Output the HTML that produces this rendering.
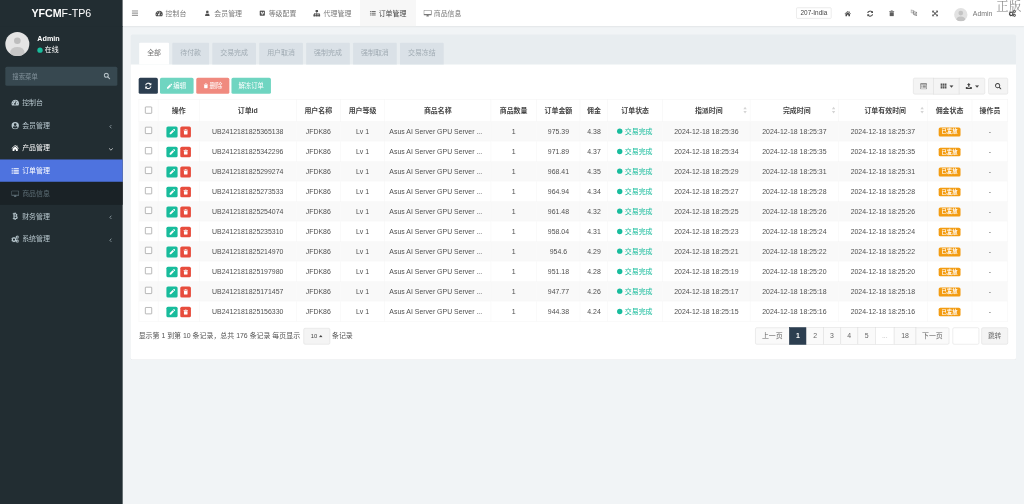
<!DOCTYPE html>
<html lang="zh-CN">
<head>
<meta charset="utf-8">
<title>YFCMF-TP6</title>
<style>
*{box-sizing:border-box;margin:0;padding:0}
html,body{width:1024px;height:504px;overflow:hidden;background:#f1f4f6}
body{font-family:"Liberation Sans","Noto Sans CJK SC",sans-serif;font-size:13px;color:#444;line-height:1.42857}
#stage{position:absolute;left:0;top:0;width:1920px;height:945px;transform:scale(.533333);transform-origin:0 0;background:#f1f4f6;overflow:hidden;filter:blur(.5px)}
.abs{position:absolute}
svg{display:block;position:absolute}
/* sidebar */
#sidebar{position:absolute;left:0;top:0;width:230px;height:945px;background:#222d32}
#logo{position:absolute;left:0;top:0;width:230px;height:50px;line-height:50px;text-align:center;color:#fff;font-size:20px;background:#222d32;white-space:nowrap}
#logo b{font-weight:700}
#avatar{position:absolute;left:10px;top:60px;width:45px;height:45px;border-radius:50%;background:#e4e4e4;overflow:hidden}
#uname{position:absolute;left:70px;top:65px;font-size:13.500px;line-height:14px;font-weight:700;color:#fff}
#ustat{position:absolute;left:70px;top:87px;font-size:13px;line-height:14px;color:#fff;white-space:nowrap}
#ustat i{display:inline-block;width:10px;height:10px;border-radius:50%;background:#18bc9c;margin-right:4px;vertical-align:-1px}
#sform{position:absolute;left:10px;top:125px;width:210px;height:36px;background:#374850;border-radius:3px;color:#82929b;font-size:12px;line-height:39px;padding-left:13px}
.mi{position:absolute;left:0;width:230px;height:42.57px;line-height:42.57px;color:#b8c7ce;font-size:13px;white-space:nowrap}
.mi span{position:absolute;left:41.5px;top:1px}
.mi.on{color:#fff}
.mi.sub{background:#1a2226;color:#5d6d75}
.mi.act{background:#4e73df;color:#fff}
/* header */
#header{position:absolute;left:230px;top:0;width:1690px;height:48.500px;background:#fff;box-shadow:0 1px 2px rgba(0,0,0,.07)}
.nt{position:absolute;top:1.200px;height:49px;line-height:49px;font-size:13px;color:#7b7b7b;white-space:nowrap}
.nt.on{color:#444}
#ntact{position:absolute;left:445px;top:0;width:105px;height:49px;background:#f7f7f7}
#selbox{position:absolute;left:1263px;top:14px;width:66px;height:21px;border:1px solid #dcdcdc;border-radius:2px;font-size:12px;line-height:20px;padding-left:7px;color:#444;white-space:nowrap;background:#fff}
#havatar{position:absolute;left:1559px;top:15px;width:25px;height:25px;border-radius:50%;background:#e2e2e2;overflow:hidden}
#hname{position:absolute;left:1594px;top:1px;line-height:50px;font-size:13px;color:#777}
#wm{position:absolute;left:1868px;top:-2.500px;font-family:"Liberation Serif","Noto Serif CJK SC",serif;font-weight:300;font-size:23px;line-height:32px;color:#808080;white-space:nowrap;letter-spacing:.8px}
/*CCSS*/
#panel{position:absolute;left:245px;top:64px;width:1660px;height:609.500px;background:#fff;border-radius:3px;box-shadow:0 1px 1px rgba(0,0,0,.05)}
#phead{position:absolute;left:0;top:0;width:1660px;height:57px;background:#e8edf0;border-radius:3px 3px 0 0}
.tb{position:absolute;top:16px;height:41px;line-height:38px;text-align:center;background:#dae1e7;color:#a0abb3;font-size:13px;border-radius:2px 2px 0 0;white-space:nowrap}
.tb.on{background:#fff;color:#6d6d6d}
.btn{position:absolute;top:82px;height:30px;border-radius:3px;color:#fff;font-size:12px;line-height:30px;white-space:nowrap}
.btn span{position:absolute;top:0}
.bg{position:absolute;top:82px;height:31px;background:#f4f4f4;border:1px solid #ddd}
table{position:absolute;left:15px;top:122px;width:1629.500px;border-collapse:collapse;table-layout:fixed;font-size:13px;color:#505050}
th{height:40.500px;font-weight:700;color:#444;text-align:center;border:1px solid #f4f4f4;white-space:nowrap;padding:4px 0 0;position:relative}
td{height:37.500px;text-align:center;border:1px solid #f5f5f5;white-space:nowrap;padding:3px 0 0;position:relative;overflow:hidden}
tbody tr:nth-child(odd){background:#f9f9f9}
.cb{display:inline-block;width:13px;height:13px;border:1px solid #7d7d7d;border-radius:1.500px;background:#fff;vertical-align:middle;position:relative;top:-3px}
.xb{display:inline-block;width:21px;height:20.500px;border-radius:3px;vertical-align:middle;position:relative}
.xb.e{background:#18bc9c;margin-right:5px}
.xb.d{background:#e74c3c;width:20px}
.pn{display:block;text-align:left;padding-left:8px}
.st{color:#18bc9c;position:relative;left:-.5px}
.st i{display:inline-block;width:10px;height:10px;border-radius:50%;background:#18bc9c;margin-right:4px;vertical-align:-.5px}
.lb{display:inline-block;background:#f39c12;color:#fff;font-weight:700;font-size:10px;line-height:16px;height:16.500px;width:41px;border-radius:3px;vertical-align:middle}
.so{position:absolute;right:5px;top:12px}
#pinfo{position:absolute;left:15px;top:550.300px;height:31px;line-height:31px;font-size:13px;color:#555;white-space:nowrap}
#psize{position:absolute;left:323.500px;top:551px;width:50px;height:31px;border:1px solid #ddd;background:#f4f4f4;border-radius:3px;font-size:11px;line-height:29px;color:#444;padding-left:13px}
#pinfo2{position:absolute;left:377.500px;top:550.300px;height:31px;line-height:31px;font-size:13px;color:#555}
.pg{position:absolute;top:550px;height:31.500px;line-height:30px;border:1px solid #ddd;background:#fafafa;color:#666;font-size:13px;text-align:center;white-space:nowrap}
.pg.on{background:#2c3e50;border-color:#2c3e50;color:#fff;font-weight:700}
.pg.dis{background:#fff;color:#bbb}
/*/CCSS*/</style>
</head>
<body>
<div id="stage">

<!-- ============ SIDEBAR ============ -->
<div id="sidebar">
  <div id="logo"><b>YFCM</b>F-TP6</div>
  <div id="avatar">
    <svg width="45" height="45" viewBox="0 0 45 45"><circle cx="22.5" cy="16.5" r="6.2" fill="#bdbdbd"/><ellipse cx="22.5" cy="37.5" rx="13.5" ry="9.5" fill="#c6c6c6"/></svg>
  </div>
  <div id="uname">Admin</div>
  <div id="ustat"><i></i>在线</div>
  <div id="sform">搜索菜单
    <svg style="left:184px;top:11px" width="13" height="13" viewBox="0 0 16 16"><circle cx="6.5" cy="6.5" r="4.6" fill="none" stroke="#b4c0c6" stroke-width="2.4"/><path d="M10 10l4.6 4.6" stroke="#b4c0c6" stroke-width="2.8" stroke-linecap="round"/></svg>
  </div>
  <!--MENU-->
  <div class="mi " style="top:171.00px"><svg style="left:20.5px;top:14.3px;fill:currentColor;" width="15" height="15" viewBox="0 0 16 16"><path fill-rule="evenodd" d="M8 2.2a7.6 7.6 0 0 1 7.6 7.6c0 1.5-.4 2.9-1.2 4H1.6A7.6 7.6 0 0 1 8 2.2zM8 3.6a.9.9 0 1 0 0 1.8.9.9 0 0 0 0-1.8zM4.2 5.2a.9.9 0 1 0 0 1.8.9.9 0 0 0 0-1.8zM2.9 9a.9.9 0 1 0 0 1.8.9.9 0 0 0 0-1.8zM13.1 9a.9.9 0 1 0 0 1.8.9.9 0 0 0 0-1.8zM10.9 5.3L8.6 9.1a1.7 1.7 0 1 1-1.3-.3l2.5-4z"/></svg><span>控制台</span></div>
  <div class="mi " style="top:213.57px"><svg style="left:20.5px;top:14.3px;fill:currentColor;" width="15" height="15" viewBox="0 0 16 16"><path fill-rule="evenodd" d="M8 .6a7.400 7.400 0 1 1 0 14.800A7.400 7.400 0 0 1 8 .6zM8 3.300a2.700 2.700 0 1 0 0 5.400 2.700 2.700 0 0 0 0-5.400zM8 13.900c1.900 0 3.600-.9 4.700-2.300-.3-1.300-1.500-2.200-2.800-2.200-.6.300-1.200.5-1.900.5s-1.300-.2-1.900-.5c-1.300 0-2.500.9-2.800 2.200 1.100 1.400 2.800 2.300 4.700 2.300z"/></svg><span>会员管理</span><svg style="left:204px;top:19.500px;fill:none;stroke:currentColor;stroke-width:1.700;opacity:.8" width="7" height="9" viewBox="0 0 8 10"><path d="M5.600 1.500L2.200 5l3.400 3.500"/></svg></div>
  <div class="mi on" style="top:256.14px"><svg style="left:20.5px;top:14.3px;fill:currentColor;" width="15" height="15" viewBox="0 0 16 16"><path d="M8 1.800l2.800 2.500V3h1.600v2.800l3 2.600-.9 1L8 3.700 1.500 9.400l-.9-1z"/><path d="M8 5l5.200 4.500v4.700h-3.700v-3.400h-3v3.400H2.800V9.500z"/></svg><span>产品管理</span><svg style="left:203px;top:20px;fill:none;stroke:currentColor;stroke-width:1.500;opacity:.85" width="10" height="8" viewBox="0 0 10 8"><path d="M1.500 2.200L5 5.600l3.500-3.400"/></svg></div>
  <div class="mi act" style="top:298.71px"><svg style="left:20.5px;top:14.3px;fill:currentColor;" width="15" height="15" viewBox="0 0 16 16"><path d="M.8 2.400h2.400v2.400H.8zM4.600 2.400h10.600v2.400H4.600zM.8 6.800h2.400v2.400H.8zM4.600 6.800h10.600v2.400H4.600zM.8 11.200h2.400v2.400H.8zM4.600 11.200h10.600v2.400H4.600z"/></svg><span>订单管理</span></div>
  <div class="mi sub" style="top:341.28px"><svg style="left:20.5px;top:14.3px;fill:currentColor;" width="15" height="15" viewBox="0 0 16 16"><path fill-rule="evenodd" d="M1.400 1.600h13.200a1.200 1.200 0 0 1 1.200 1.200v8a1.200 1.200 0 0 1-1.200 1.200H9.800c0 .6.300 1.200.6 1.600.3.400.1.800-.4.800H6c-.5 0-.7-.4-.4-.8.300-.4.600-1 .6-1.600H1.400A1.200 1.200 0 0 1 .2 10.800v-8a1.200 1.200 0 0 1 1.200-1.200zM1.500 2.900v6.800h13V2.900z"/></svg><span>商品信息</span></div>
  <div class="mi " style="top:383.85px"><svg style="left:20.5px;top:14.3px;fill:currentColor;" width="15" height="15" viewBox="0 0 16 16"><path fill-rule="evenodd" d="M3.200 2.200h2V.4h1.500v1.800h1.100V.4h1.500v1.900c1.900.3 3 1.200 3 2.800 0 1.100-.5 1.900-1.500 2.400 1.400.4 2.200 1.400 2.200 2.800 0 2-1.400 3.100-3.700 3.300v2H7.800v-1.900H6.700v1.900H5.200v-1.900h-2v-1.700h1.300V3.900H3.200zM6.800 3.900v2.900h1.400c1.100 0 1.700-.5 1.700-1.500s-.6-1.400-1.800-1.400zM6.800 8.500V12h1.700c1.300 0 2-.6 2-1.800s-.7-1.700-2.100-1.700z"/></svg><span>财务管理</span><svg style="left:204px;top:19.500px;fill:none;stroke:currentColor;stroke-width:1.700;opacity:.8" width="7" height="9" viewBox="0 0 8 10"><path d="M5.600 1.500L2.200 5l3.400 3.500"/></svg></div>
  <div class="mi " style="top:426.42px"><svg style="left:20.5px;top:14.3px;fill:currentColor;" width="15" height="15" viewBox="0 0 16 16"><path fill-rule="evenodd" d="M5.600 4.200l1.100.2.600-1 1.400.8-.4 1.100.8.800 1.100-.4.800 1.400-1 .6.200 1.100-.2 1.100 1 .6-.8 1.400-1.100-.4-.8.800.4 1.100-1.400.8-.6-1-1.100.2-1.100-.2-.6 1-1.400-.8.400-1.100-.8-.8-1.100.4-.8-1.400 1-.6L1 8.800l.2-1.100-1-.6L1 5.700l1.100.4.800-.8-.4-1.100 1.400-.8.600 1zM5.600 6.600a2.200 2.200 0 1 0 0 4.400 2.200 2.200 0 0 0 0-4.400z"/><path fill-rule="evenodd" d="M12.700 1.200l.7.300.7-.5.700.7-.5.700.3.700.9.100v1l-.9.100-.3.700.5.700-.7.700-.7-.5-.7.300-.1.900h-1l-.1-.9-.7-.3-.7.500-.7-.7.500-.7-.3-.7-.9-.1v-1l.9-.1.300-.7-.5-.7.700-.7.700.5.700-.3.100-.9h1zM12.200 2.700a1.100 1.100 0 1 0 0 2.200 1.100 1.100 0 0 0 0-2.200z"/><path fill-rule="evenodd" d="M12.700 9.200l.7.300.7-.5.700.7-.5.700.3.700.9.100v1l-.9.100-.3.700.5.700-.7.700-.7-.5-.7.300-.1.900h-1l-.1-.9-.7-.3-.7.500-.7-.7.500-.7-.3-.7-.9-.1v-1l.9-.1.300-.7-.5-.7.700-.7.700.5.700-.3.100-.9h1zM12.200 10.700a1.100 1.100 0 1 0 0 2.200 1.100 1.100 0 0 0 0-2.200z"/></svg><span>系统管理</span><svg style="left:204px;top:19.500px;fill:none;stroke:currentColor;stroke-width:1.700;opacity:.8" width="7" height="9" viewBox="0 0 8 10"><path d="M5.600 1.500L2.200 5l3.400 3.500"/></svg></div>
  <!--/MENU-->
</div>

<!-- ============ HEADER ============ -->
<div id="header">
  <!--HEADER-->
  <div id="ntact" style="left:445px;width:105px"></div>
  <svg style="left:17px;top:19px" width="12" height="11" viewBox="0 0 12 11"><path fill="#9a9a9a" d="M0 0h12v2.500H0zM0 4.250h12v2.500H0zM0 8.500h12V11H0z"/></svg>
  <svg style="left:61px;top:17.8px;fill:#505050;" width="14.5" height="14.5" viewBox="0 0 16 16"><path fill-rule="evenodd" d="M8 2.2a7.6 7.6 0 0 1 7.6 7.6c0 1.5-.4 2.9-1.2 4H1.6A7.6 7.6 0 0 1 8 2.2zM8 3.6a.9.9 0 1 0 0 1.8.9.9 0 0 0 0-1.8zM4.2 5.2a.9.9 0 1 0 0 1.8.9.9 0 0 0 0-1.8zM2.9 9a.9.9 0 1 0 0 1.8.9.9 0 0 0 0-1.8zM13.1 9a.9.9 0 1 0 0 1.8.9.9 0 0 0 0-1.8zM10.9 5.3L8.6 9.1a1.7 1.7 0 1 1-1.3-.3l2.5-4z"/></svg>
  <div class="nt " style="left:80.4px">控制台</div>
  <svg style="left:153px;top:19.2px;fill:#505050;" width="11.5" height="11.5" viewBox="0 0 16 16"><circle cx="8" cy="4.6" r="3.4"/><path d="M2.2 14.6c0-3.6 1.8-6 3.6-6 .6.5 1.4.8 2.2.8s1.6-.3 2.2-.8c1.8 0 3.6 2.4 3.6 6 0 .5-.4.8-.9.8H3.100c-.5 0-.9-.3-.9-.8z"/></svg>
  <div class="nt " style="left:171.8px">会员管理</div>
  <svg style="left:255.5px;top:19.2px;fill:#505050;" width="11.5" height="11.5" viewBox="0 0 16 16"><path fill-rule="evenodd" d="M3.200 1.200h9.600a2 2 0 0 1 2 2v9.600a2 2 0 0 1-2 2H3.200a2 2 0 0 1-2-2V3.200a2 2 0 0 1 2-2zM3.400 5.800l.5.700c.6-.4 1-.5 1.300.5l.9 3.300c.3 1 .7 1.600 1.400 1.600 1.500 0 4.700-3.900 4.900-6 .1-1.300-.5-1.900-1.500-1.900-1.200 0-2 .8-2.300 2.200.9-.4 1.500.1 1.100 1-.4.800-.8 1.500-1.200 1.500-.3 0-.5-.7-.8-2.200-.3-1.600-.7-2.500-1.700-2.400-.9.100-1.800 1-2.600 1.700z"/></svg>
  <div class="nt " style="left:273.7px">等级配置</div>
  <svg style="left:357px;top:18.0px;fill:#505050;" width="14" height="14" viewBox="0 0 16 16"><path d="M6 1h4a.7.7 0 0 1 .7.7v3a.7.7 0 0 1-.7.700H8.700v1.800H13a.9.9 0 0 1 .9.900v2.100h.8a.7.7 0 0 1 .7.700v3a.7.7 0 0 1-.7.700h-3.200a.7.7 0 0 1-.7-.7v-3a.7.7 0 0 1 .7-.7h1.100V8.500H8.700v1.700h.900a.7.7 0 0 1 .7.700v3a.7.7 0 0 1-.7.700H6.400a.7.7 0 0 1-.7-.7v-3a.7.7 0 0 1 .7-.7h.9V8.500H3.400v1.700h1.100a.7.7 0 0 1 .7.700v3a.7.7 0 0 1-.7.700H1.300a.7.7 0 0 1-.7-.7v-3a.7.7 0 0 1 .7-.7h.800V8.100a.9.9 0 0 1 .9-.9h4.300V5.400H6a.7.7 0 0 1-.7-.7v-3A.7.7 0 0 1 6 1z"/></svg>
  <div class="nt " style="left:376.8px">代理管理</div>
  <svg style="left:462.5px;top:19.0px;fill:#707070;" width="12" height="12" viewBox="0 0 16 16"><path d="M.8 2.400h2.400v2.400H.8zM4.600 2.400h10.600v2.400H4.600zM.8 6.800h2.400v2.400H.8zM4.600 6.800h10.600v2.400H4.600zM.8 11.200h2.400v2.400H.8zM4.600 11.200h10.600v2.400H4.600z"/></svg>
  <div class="nt on" style="left:480px">订单管理</div>
  <svg style="left:564px;top:17.2px;fill:#7a7a7a;" width="15.5" height="15.5" viewBox="0 0 16 16"><path fill-rule="evenodd" d="M1.400 1.600h13.200a1.200 1.200 0 0 1 1.200 1.200v8a1.200 1.200 0 0 1-1.200 1.200H9.800c0 .6.300 1.200.6 1.600.3.400.1.800-.4.800H6c-.5 0-.7-.4-.4-.8.300-.4.600-1 .6-1.600H1.400A1.200 1.200 0 0 1 .2 10.800v-8a1.200 1.200 0 0 1 1.200-1.200zM1.500 2.900v6.800h13V2.900z"/></svg>
  <div class="nt " style="left:583.3px">商品信息</div>
  <div id="selbox">207-India</div>
  <svg style="left:1352.5px;top:18.5px;fill:#4a4a4a;" width="13" height="13" viewBox="0 0 16 16"><path d="M8 1.800l2.800 2.500V3h1.600v2.800l3 2.600-.9 1L8 3.700 1.500 9.400l-.9-1z"/><path d="M8 5l5.200 4.500v4.700h-3.700v-3.400h-3v3.400H2.800V9.500z"/></svg>
  <svg style="left:1394.5px;top:18.5px;fill:#4a4a4a;" width="13" height="13" viewBox="0 0 16 16"><path d="M14.6 1.4v5.200H9.400l1.900-1.900A4.600 4.600 0 0 0 3.600 6.600H1.140A7 7 0 0 1 13 3zM1.400 14.600V9.400h5.200l-1.900 1.900a4.600 4.600 0 0 0 7.700-1.900h2.460A7 7 0 0 1 3 13z"/></svg>
  <svg style="left:1435.5px;top:19.0px;fill:#5e5e5e;" width="12" height="12" viewBox="0 0 16 16"><path d="M5.600 1.200a1 1 0 0 1 1-.8h2.800a1 1 0 0 1 1 .8l.3 1h3a.5.500 0 0 1 .5.500v.8a.5.500 0 0 1-.5.500H2.300a.5.500 0 0 1-.5-.5v-.8a.5.500 0 0 1 .5-.5h3zM2.900 5.200h10.200v8.700c0 .9-.7 1.700-1.600 1.700h-7c-.9 0-1.600-.8-1.600-1.700z"/></svg>
  <svg style="left:1477.0px;top:17.0px;fill:#5e5e5e;" width="13" height="13" viewBox="0 0 16 16"><path opacity=".45" fill-rule="evenodd" d="M.6 1.200l8.200 1.500v8.100L.6 9.300zM3.600 3.500l-1.300 4.200h1l.2-.9h1.500l.3.900h1L5 3.600zM4.200 4.500l.5 1.500h-.9z"/><path fill-rule="evenodd" d="M7.200 5.400l8.200 1.600v8.200l-8.200-1.600zM8.300 7v5.600l5.900 1.200V8.200zM10.600 8.200v.7l-1.500-.2v.7l2.400.4c-.1.500-.4 1-.8 1.400-.3-.3-.5-.6-.7-1l-.6.200c.2.500.5.900.8 1.300-.4.300-.9.500-1.400.6l.3.600c.6-.2 1.100-.4 1.600-.8.500.5 1.100.9 1.800 1.200l.2-.7c-.6-.2-1.100-.6-1.500-1 .5-.5.800-1.200 1-1.800l.8.100v-.7l-1.700-.3v-.6z"/></svg>
  <svg style="left:1517.3px;top:18.8px;fill:#5e5e5e;" width="12.5" height="12.5" viewBox="0 0 16 16"><path d="M1 1h5.600L4.600 3 6.600 5 8 6.400 9.400 5l2-2L9.400 1H15v5.600L13 4.600l-2 2L9.600 8l1.400 1.400 2 2 2-2V15H9.400l2-2-2-2L8 9.600 6.600 11l-2 2 2 2H1V9.400l2 2 2-2L6.400 8 5 6.600l-2-2-2 2z"/></svg>
  <svg style="left:1660.8px;top:17.8px;fill:#4a4a4a;" width="14.5" height="14.5" viewBox="0 0 16 16"><path fill-rule="evenodd" d="M5.600 4.200l1.100.2.600-1 1.400.8-.4 1.100.8.800 1.100-.4.800 1.400-1 .6.200 1.100-.2 1.100 1 .6-.8 1.400-1.100-.4-.8.800.4 1.100-1.400.8-.6-1-1.100.2-1.100-.2-.6 1-1.400-.8.400-1.100-.8-.8-1.100.4-.8-1.400 1-.6L1 8.800l.2-1.100-1-.6L1 5.700l1.100.4.800-.8-.4-1.100 1.400-.8.600 1zM5.600 6.600a2.200 2.200 0 1 0 0 4.400 2.200 2.200 0 0 0 0-4.400z"/><path fill-rule="evenodd" d="M12.700 1.200l.7.300.7-.5.700.7-.5.700.3.700.9.100v1l-.9.100-.3.700.5.700-.7.700-.7-.5-.7.300-.1.900h-1l-.1-.9-.7-.3-.7.500-.7-.7.500-.7-.3-.7-.9-.1v-1l.9-.1.300-.7-.5-.7.700-.7.700.5.700-.3.100-.9h1zM12.200 2.700a1.100 1.100 0 1 0 0 2.200 1.100 1.100 0 0 0 0-2.200z"/><path fill-rule="evenodd" d="M12.700 9.200l.7.300.7-.5.700.7-.5.700.3.700.9.100v1l-.9.100-.3.700.5.700-.7.700-.7-.5-.7.300-.1.900h-1l-.1-.9-.7-.3-.7.500-.7-.7.500-.7-.3-.7-.9-.1v-1l.9-.1.300-.7-.5-.7.700-.7.700.5.700-.3.100-.9h1zM12.200 10.700a1.100 1.100 0 1 0 0 2.200 1.100 1.100 0 0 0 0-2.200z"/></svg>
  <div id="havatar"><svg width="25" height="25" viewBox="0 0 45 45"><circle cx="22.500" cy="17" r="8" fill="#c4c4c4"/><ellipse cx="22.500" cy="41" rx="15" ry="12" fill="#c4c4c4"/></svg></div>
  <div id="hname">Admin</div>
  <!--/HEADER-->
</div>

<!-- ============ CONTENT ============ -->
<!--CONTENT-->
<div id="panel">
 <div id="phead">
  <div class="tb on" style="left:16px;width:56px">全部</div>
  <div class="tb " style="left:78px;width:69px">待付款</div>
  <div class="tb " style="left:153px;width:82px">交易完成</div>
  <div class="tb " style="left:241px;width:82px">用户取消</div>
  <div class="tb " style="left:329px;width:82px">强制完成</div>
  <div class="tb " style="left:417px;width:82px">强制取消</div>
  <div class="tb " style="left:505px;width:82px">交易冻结</div>
 </div>
 <div class="btn" style="left:15px;width:36px;background:#2c3e50"><svg style="left:11px;top:8px;fill:#fff;" width="14" height="14" viewBox="0 0 16 16"><path d="M14.6 1.4v5.200H9.400l1.900-1.900A4.600 4.600 0 0 0 3.600 6.600H1.140A7 7 0 0 1 13 3zM1.400 14.600V9.400h5.200l-1.900 1.900a4.600 4.600 0 0 0 7.700-1.900h2.460A7 7 0 0 1 3 13z"/></svg></div>
 <div class="btn" style="left:55px;width:63px;background:#6fd5c1"><svg style="left:12px;top:9.5px;fill:#fff;" width="11.5" height="11.5" viewBox="0 0 16 16"><path d="M11.300 1.300a1.400 1.400 0 0 1 2 0l1.400 1.400a1.400 1.400 0 0 1 0 2l-1.300 1.300-3.400-3.400zM9 3.600l3.400 3.400-7.600 7.600H1.400v-3.400z"/></svg><span style="left:25px">编辑</span></div>
 <div class="btn" style="left:122.500px;width:62px;background:#f08a7f"><svg style="left:13.5px;top:10px;fill:#fff;" width="10" height="10" viewBox="0 0 16 16"><path d="M5.600 1.200a1 1 0 0 1 1-.8h2.800a1 1 0 0 1 1 .8l.3 1h3a.5.500 0 0 1 .5.500v.8a.5.500 0 0 1-.5.500H2.300a.5.500 0 0 1-.5-.5v-.8a.5.500 0 0 1 .5-.5h3zM2.900 5.200h10.200v8.700c0 .9-.7 1.700-1.600 1.700h-7c-.9 0-1.600-.8-1.600-1.700z"/></svg><span style="left:25.500px">删除</span></div>
 <div class="btn" style="left:189px;width:74px;background:#6fd5c1"><span style="left:13px">解冻订单</span></div>
 <div class="bg" style="left:1467px;width:39px;border-radius:3px 0 0 3px"><svg style="left:12px;top:7.5px;fill:#707070;" width="13.5" height="13.5" viewBox="0 0 16 16"><path fill-rule="evenodd" d="M1.600 1.400h12.800a1 1 0 0 1 1 1v11.200a1 1 0 0 1-1 1H1.600a1 1 0 0 1-1-1V2.400a1 1 0 0 1 1-1zM1.800 4.200v9.200h12.400V4.200zM3 5.600h1.600v1.500H3zM5.800 5.600H13v1.500H5.800zM3 8.100h1.600v1.500H3zM5.800 8.100H13v1.500H5.800zM3 10.600h1.600v1.500H3zM5.800 10.600H13v1.500H5.800z"/></svg></div>
 <div class="bg" style="left:1505px;width:49px"><svg style="left:11.5px;top:8px;fill:#555;" width="12.5" height="12.5" viewBox="0 0 16 16"><path d="M.6 2h4.200v3.400H.6zM5.900 2h4.200v3.400H5.900zM11.200 2h4.200v3.400h-4.200zM.6 6.300h4.200v3.400H.6zM5.900 6.300h4.200v3.400H5.900zM11.200 6.300h4.200v3.400h-4.200zM.6 10.600h4.200V14H.6zM5.900 10.600h4.200V14H5.900zM11.200 10.600h4.200V14h-4.200z"/></svg><svg style="left:29px;top:13px" width="8" height="5" viewBox="0 0 8 5"><path d="M0 0h8L4 4.500z" fill="#444"/></svg></div>
 <div class="bg" style="left:1553px;width:49px;border-radius:0 3px 3px 0"><svg style="left:11px;top:8px;fill:#444;" width="13" height="13" viewBox="0 0 16 16"><path d="M8 .8l4.200 4.400H9.600v4H6.400v-4H3.800zM1 10.200h3.600l1.200 1.600h4.400l1.200-1.600H15v4.600H1z"/></svg><svg style="left:29px;top:13px" width="8" height="5" viewBox="0 0 8 5"><path d="M0 0h8L4 4.500z" fill="#444"/></svg></div>
 <div class="bg" style="left:1607.500px;width:37px;border-radius:3px"><svg style="left:11px;top:7.5px;fill:#444;" width="13.5" height="13.5" viewBox="0 0 16 16"><path fill-rule="evenodd" d="M6.600.8a5.800 5.800 0 0 1 4.800 9l3.500 3.500a1.200 1.200 0 0 1-1.700 1.700L9.700 11.500A5.800 5.800 0 1 1 6.600.8zM6.600 2.900a3.700 3.700 0 1 0 0 7.400 3.700 3.700 0 0 0 0-7.400z"/></svg></div>
 <table>
  <colgroup><col style="width:36px"><col style="width:77px"><col style="width:182px"><col style="width:82.5px"><col style="width:83.5px"><col style="width:198.6px"><col style="width:85.9px"><col style="width:82px"><col style="width:51.5px"><col style="width:103px"><col style="width:164px"><col style="width:166px"><col style="width:165.7px"><col style="width:84.3px"><col style="width:67.5px"></colgroup>
  <thead><tr>
   <th><i class="cb"></i></th>
   <th>操作</th>
   <th>订单id</th>
   <th>用户名称</th>
   <th>用户等级</th>
   <th>商品名称</th>
   <th>商品数量</th>
   <th>订单金额</th>
   <th>佣金</th>
   <th>订单状态</th>
   <th><span style="position:relative;left:4.500px">指派时间</span><svg class="so" width="8" height="15" viewBox="0 0 8 15"><path d="M4 1l3.200 5H.8zM4 14L.8 9h6.400z" fill="#d4d4d4"/></svg></th>
   <th><span style="position:relative;left:4.500px">完成时间</span><svg class="so" width="8" height="15" viewBox="0 0 8 15"><path d="M4 1l3.200 5H.8zM4 14L.8 9h6.400z" fill="#d4d4d4"/></svg></th>
   <th><span style="position:relative;left:4.500px">订单有效时间</span><svg class="so" width="8" height="15" viewBox="0 0 8 15"><path d="M4 1l3.200 5H.8zM4 14L.8 9h6.400z" fill="#d4d4d4"/></svg></th>
   <th>佣金状态</th>
   <th>操作员</th>
  </tr></thead>
  <tbody>
   <tr><td><i class="cb"></i></td><td><i class="xb e"><svg style="left:4.5px;top:4.3px;fill:#fff;" width="12" height="12" viewBox="0 0 16 16"><path d="M11.300 1.300a1.400 1.400 0 0 1 2 0l1.400 1.400a1.400 1.400 0 0 1 0 2l-1.300 1.300-3.400-3.400zM9 3.600l3.400 3.400-7.600 7.600H1.400v-3.400z"/></svg></i><i class="xb d"><svg style="left:5px;top:5px;fill:#fff;" width="10.5" height="10.5" viewBox="0 0 16 16"><path d="M5.600 1.200a1 1 0 0 1 1-.8h2.800a1 1 0 0 1 1 .8l.3 1h3a.5.500 0 0 1 .5.500v.8a.5.500 0 0 1-.5.500H2.300a.5.500 0 0 1-.5-.5v-.8a.5.500 0 0 1 .5-.5h3zM2.900 5.200h10.200v8.700c0 .9-.7 1.700-1.600 1.700h-7c-.9 0-1.600-.8-1.600-1.700z"/></svg></i></td><td>UB2412181825365138</td><td>JFDK86</td><td>Lv 1</td><td><span class="pn">Asus AI Server GPU Server ...</span></td><td>1</td><td>975.39</td><td>4.38</td><td><span class="st"><i></i>交易完成</span></td><td>2024-12-18 18:25:36</td><td>2024-12-18 18:25:37</td><td>2024-12-18 18:25:37</td><td><span class="lb">已发放</span></td><td>-</td></tr>
   <tr><td><i class="cb"></i></td><td><i class="xb e"><svg style="left:4.5px;top:4.3px;fill:#fff;" width="12" height="12" viewBox="0 0 16 16"><path d="M11.300 1.300a1.400 1.400 0 0 1 2 0l1.400 1.400a1.400 1.400 0 0 1 0 2l-1.300 1.300-3.400-3.400zM9 3.600l3.400 3.400-7.600 7.600H1.400v-3.400z"/></svg></i><i class="xb d"><svg style="left:5px;top:5px;fill:#fff;" width="10.5" height="10.5" viewBox="0 0 16 16"><path d="M5.600 1.200a1 1 0 0 1 1-.8h2.800a1 1 0 0 1 1 .8l.3 1h3a.5.500 0 0 1 .5.500v.8a.5.500 0 0 1-.5.500H2.300a.5.500 0 0 1-.5-.5v-.8a.5.500 0 0 1 .5-.5h3zM2.900 5.200h10.200v8.700c0 .9-.7 1.700-1.600 1.700h-7c-.9 0-1.600-.8-1.600-1.700z"/></svg></i></td><td>UB2412181825342296</td><td>JFDK86</td><td>Lv 1</td><td><span class="pn">Asus AI Server GPU Server ...</span></td><td>1</td><td>971.89</td><td>4.37</td><td><span class="st"><i></i>交易完成</span></td><td>2024-12-18 18:25:34</td><td>2024-12-18 18:25:35</td><td>2024-12-18 18:25:35</td><td><span class="lb">已发放</span></td><td>-</td></tr>
   <tr><td><i class="cb"></i></td><td><i class="xb e"><svg style="left:4.5px;top:4.3px;fill:#fff;" width="12" height="12" viewBox="0 0 16 16"><path d="M11.300 1.300a1.400 1.400 0 0 1 2 0l1.400 1.400a1.400 1.400 0 0 1 0 2l-1.300 1.300-3.400-3.400zM9 3.600l3.400 3.400-7.600 7.600H1.400v-3.400z"/></svg></i><i class="xb d"><svg style="left:5px;top:5px;fill:#fff;" width="10.5" height="10.5" viewBox="0 0 16 16"><path d="M5.600 1.200a1 1 0 0 1 1-.8h2.800a1 1 0 0 1 1 .8l.3 1h3a.5.500 0 0 1 .5.500v.8a.5.500 0 0 1-.5.500H2.300a.5.500 0 0 1-.5-.5v-.8a.5.500 0 0 1 .5-.5h3zM2.900 5.200h10.200v8.700c0 .9-.7 1.700-1.600 1.700h-7c-.9 0-1.600-.8-1.600-1.700z"/></svg></i></td><td>UB2412181825299274</td><td>JFDK86</td><td>Lv 1</td><td><span class="pn">Asus AI Server GPU Server ...</span></td><td>1</td><td>968.41</td><td>4.35</td><td><span class="st"><i></i>交易完成</span></td><td>2024-12-18 18:25:29</td><td>2024-12-18 18:25:31</td><td>2024-12-18 18:25:31</td><td><span class="lb">已发放</span></td><td>-</td></tr>
   <tr><td><i class="cb"></i></td><td><i class="xb e"><svg style="left:4.5px;top:4.3px;fill:#fff;" width="12" height="12" viewBox="0 0 16 16"><path d="M11.300 1.300a1.400 1.400 0 0 1 2 0l1.400 1.400a1.400 1.400 0 0 1 0 2l-1.300 1.300-3.400-3.400zM9 3.600l3.400 3.400-7.600 7.600H1.400v-3.400z"/></svg></i><i class="xb d"><svg style="left:5px;top:5px;fill:#fff;" width="10.5" height="10.5" viewBox="0 0 16 16"><path d="M5.600 1.200a1 1 0 0 1 1-.8h2.800a1 1 0 0 1 1 .8l.3 1h3a.5.500 0 0 1 .5.500v.8a.5.500 0 0 1-.5.500H2.300a.5.500 0 0 1-.5-.5v-.8a.5.500 0 0 1 .5-.5h3zM2.900 5.200h10.200v8.700c0 .9-.7 1.700-1.600 1.700h-7c-.9 0-1.600-.8-1.600-1.700z"/></svg></i></td><td>UB2412181825273533</td><td>JFDK86</td><td>Lv 1</td><td><span class="pn">Asus AI Server GPU Server ...</span></td><td>1</td><td>964.94</td><td>4.34</td><td><span class="st"><i></i>交易完成</span></td><td>2024-12-18 18:25:27</td><td>2024-12-18 18:25:28</td><td>2024-12-18 18:25:28</td><td><span class="lb">已发放</span></td><td>-</td></tr>
   <tr><td><i class="cb"></i></td><td><i class="xb e"><svg style="left:4.5px;top:4.3px;fill:#fff;" width="12" height="12" viewBox="0 0 16 16"><path d="M11.300 1.300a1.400 1.400 0 0 1 2 0l1.400 1.400a1.400 1.400 0 0 1 0 2l-1.300 1.300-3.400-3.400zM9 3.600l3.400 3.400-7.600 7.600H1.400v-3.400z"/></svg></i><i class="xb d"><svg style="left:5px;top:5px;fill:#fff;" width="10.5" height="10.5" viewBox="0 0 16 16"><path d="M5.600 1.200a1 1 0 0 1 1-.8h2.800a1 1 0 0 1 1 .8l.3 1h3a.5.500 0 0 1 .5.500v.8a.5.500 0 0 1-.5.500H2.300a.5.500 0 0 1-.5-.5v-.8a.5.500 0 0 1 .5-.5h3zM2.900 5.200h10.200v8.700c0 .9-.7 1.700-1.600 1.700h-7c-.9 0-1.600-.8-1.600-1.700z"/></svg></i></td><td>UB2412181825254074</td><td>JFDK86</td><td>Lv 1</td><td><span class="pn">Asus AI Server GPU Server ...</span></td><td>1</td><td>961.48</td><td>4.32</td><td><span class="st"><i></i>交易完成</span></td><td>2024-12-18 18:25:25</td><td>2024-12-18 18:25:26</td><td>2024-12-18 18:25:26</td><td><span class="lb">已发放</span></td><td>-</td></tr>
   <tr><td><i class="cb"></i></td><td><i class="xb e"><svg style="left:4.5px;top:4.3px;fill:#fff;" width="12" height="12" viewBox="0 0 16 16"><path d="M11.300 1.300a1.400 1.400 0 0 1 2 0l1.400 1.400a1.400 1.400 0 0 1 0 2l-1.300 1.300-3.400-3.400zM9 3.600l3.400 3.400-7.600 7.600H1.400v-3.400z"/></svg></i><i class="xb d"><svg style="left:5px;top:5px;fill:#fff;" width="10.5" height="10.5" viewBox="0 0 16 16"><path d="M5.600 1.200a1 1 0 0 1 1-.8h2.800a1 1 0 0 1 1 .8l.3 1h3a.5.500 0 0 1 .5.500v.8a.5.500 0 0 1-.5.500H2.300a.5.500 0 0 1-.5-.5v-.8a.5.500 0 0 1 .5-.5h3zM2.900 5.200h10.200v8.700c0 .9-.7 1.700-1.600 1.700h-7c-.9 0-1.600-.8-1.600-1.700z"/></svg></i></td><td>UB2412181825235310</td><td>JFDK86</td><td>Lv 1</td><td><span class="pn">Asus AI Server GPU Server ...</span></td><td>1</td><td>958.04</td><td>4.31</td><td><span class="st"><i></i>交易完成</span></td><td>2024-12-18 18:25:23</td><td>2024-12-18 18:25:24</td><td>2024-12-18 18:25:24</td><td><span class="lb">已发放</span></td><td>-</td></tr>
   <tr><td><i class="cb"></i></td><td><i class="xb e"><svg style="left:4.5px;top:4.3px;fill:#fff;" width="12" height="12" viewBox="0 0 16 16"><path d="M11.300 1.300a1.400 1.400 0 0 1 2 0l1.400 1.400a1.400 1.400 0 0 1 0 2l-1.300 1.300-3.400-3.400zM9 3.600l3.400 3.400-7.600 7.600H1.400v-3.400z"/></svg></i><i class="xb d"><svg style="left:5px;top:5px;fill:#fff;" width="10.5" height="10.5" viewBox="0 0 16 16"><path d="M5.600 1.200a1 1 0 0 1 1-.8h2.800a1 1 0 0 1 1 .8l.3 1h3a.5.500 0 0 1 .5.500v.8a.5.500 0 0 1-.5.500H2.300a.5.500 0 0 1-.5-.5v-.8a.5.500 0 0 1 .5-.5h3zM2.900 5.200h10.200v8.700c0 .9-.7 1.700-1.600 1.700h-7c-.9 0-1.600-.8-1.600-1.700z"/></svg></i></td><td>UB2412181825214970</td><td>JFDK86</td><td>Lv 1</td><td><span class="pn">Asus AI Server GPU Server ...</span></td><td>1</td><td>954.6</td><td>4.29</td><td><span class="st"><i></i>交易完成</span></td><td>2024-12-18 18:25:21</td><td>2024-12-18 18:25:22</td><td>2024-12-18 18:25:22</td><td><span class="lb">已发放</span></td><td>-</td></tr>
   <tr><td><i class="cb"></i></td><td><i class="xb e"><svg style="left:4.5px;top:4.3px;fill:#fff;" width="12" height="12" viewBox="0 0 16 16"><path d="M11.300 1.300a1.400 1.400 0 0 1 2 0l1.400 1.400a1.400 1.400 0 0 1 0 2l-1.300 1.300-3.400-3.400zM9 3.600l3.400 3.400-7.600 7.600H1.400v-3.400z"/></svg></i><i class="xb d"><svg style="left:5px;top:5px;fill:#fff;" width="10.5" height="10.5" viewBox="0 0 16 16"><path d="M5.600 1.200a1 1 0 0 1 1-.8h2.800a1 1 0 0 1 1 .8l.3 1h3a.5.500 0 0 1 .5.500v.8a.5.500 0 0 1-.5.500H2.300a.5.500 0 0 1-.5-.5v-.8a.5.500 0 0 1 .5-.5h3zM2.900 5.200h10.200v8.700c0 .9-.7 1.700-1.600 1.700h-7c-.9 0-1.600-.8-1.600-1.700z"/></svg></i></td><td>UB2412181825197980</td><td>JFDK86</td><td>Lv 1</td><td><span class="pn">Asus AI Server GPU Server ...</span></td><td>1</td><td>951.18</td><td>4.28</td><td><span class="st"><i></i>交易完成</span></td><td>2024-12-18 18:25:19</td><td>2024-12-18 18:25:20</td><td>2024-12-18 18:25:20</td><td><span class="lb">已发放</span></td><td>-</td></tr>
   <tr><td><i class="cb"></i></td><td><i class="xb e"><svg style="left:4.5px;top:4.3px;fill:#fff;" width="12" height="12" viewBox="0 0 16 16"><path d="M11.300 1.300a1.400 1.400 0 0 1 2 0l1.400 1.400a1.400 1.400 0 0 1 0 2l-1.300 1.300-3.400-3.400zM9 3.600l3.400 3.400-7.600 7.600H1.400v-3.400z"/></svg></i><i class="xb d"><svg style="left:5px;top:5px;fill:#fff;" width="10.5" height="10.5" viewBox="0 0 16 16"><path d="M5.600 1.200a1 1 0 0 1 1-.8h2.800a1 1 0 0 1 1 .8l.3 1h3a.5.500 0 0 1 .5.500v.8a.5.500 0 0 1-.5.500H2.300a.5.500 0 0 1-.5-.5v-.8a.5.500 0 0 1 .5-.5h3zM2.900 5.200h10.200v8.700c0 .9-.7 1.700-1.600 1.700h-7c-.9 0-1.600-.8-1.600-1.700z"/></svg></i></td><td>UB2412181825171457</td><td>JFDK86</td><td>Lv 1</td><td><span class="pn">Asus AI Server GPU Server ...</span></td><td>1</td><td>947.77</td><td>4.26</td><td><span class="st"><i></i>交易完成</span></td><td>2024-12-18 18:25:17</td><td>2024-12-18 18:25:18</td><td>2024-12-18 18:25:18</td><td><span class="lb">已发放</span></td><td>-</td></tr>
   <tr><td><i class="cb"></i></td><td><i class="xb e"><svg style="left:4.5px;top:4.3px;fill:#fff;" width="12" height="12" viewBox="0 0 16 16"><path d="M11.300 1.300a1.400 1.400 0 0 1 2 0l1.400 1.400a1.400 1.400 0 0 1 0 2l-1.300 1.300-3.400-3.400zM9 3.600l3.400 3.400-7.600 7.600H1.400v-3.400z"/></svg></i><i class="xb d"><svg style="left:5px;top:5px;fill:#fff;" width="10.5" height="10.5" viewBox="0 0 16 16"><path d="M5.600 1.200a1 1 0 0 1 1-.8h2.800a1 1 0 0 1 1 .8l.3 1h3a.5.500 0 0 1 .5.500v.8a.5.500 0 0 1-.5.500H2.300a.5.500 0 0 1-.5-.5v-.8a.5.500 0 0 1 .5-.5h3zM2.900 5.200h10.200v8.700c0 .9-.7 1.700-1.600 1.700h-7c-.9 0-1.600-.8-1.600-1.700z"/></svg></i></td><td>UB2412181825156330</td><td>JFDK86</td><td>Lv 1</td><td><span class="pn">Asus AI Server GPU Server ...</span></td><td>1</td><td>944.38</td><td>4.24</td><td><span class="st"><i></i>交易完成</span></td><td>2024-12-18 18:25:15</td><td>2024-12-18 18:25:16</td><td>2024-12-18 18:25:16</td><td><span class="lb">已发放</span></td><td>-</td></tr>
  </tbody>
 </table>
 <div id="pinfo">显示第 1 到第 10 条记录，总共 176 条记录 每页显示</div>
 <div id="psize">10<svg style="left:28px;top:12px" width="7" height="5" viewBox="0 0 8 5"><path d="M0 4.500h8L4 0z" fill="#444"/></svg></div>
 <div id="pinfo2">条记录</div>
 <div class="pg " style="left:1170.5px;width:65.1px;border-radius:3px 0 0 3px;">上一页</div>
 <div class="pg on" style="left:1234.6px;width:33.3px;">1</div>
 <div class="pg " style="left:1266.9px;width:32.8px;">2</div>
 <div class="pg " style="left:1298.7px;width:32.8px;">3</div>
 <div class="pg " style="left:1330.5px;width:33.3px;">4</div>
 <div class="pg " style="left:1362.8px;width:34.2px;">5</div>
 <div class="pg dis" style="left:1396.0px;width:36.0px;">...</div>
 <div class="pg " style="left:1431.0px;width:42.0px;">18</div>
 <div class="pg " style="left:1472.0px;width:62.5px;border-radius:0 3px 3px 0;">下一页</div>
 <div class="pg" style="left:1540.500px;width:50px;background:#fff;border-radius:3px"></div>
 <div class="pg" style="left:1595px;width:50px;background:#f4f4f4;border-radius:3px;font-size:12px">跳转</div>
</div>
<!--/CONTENT-->

<div id="wm">正版</div>
</div>
</body>
</html>
